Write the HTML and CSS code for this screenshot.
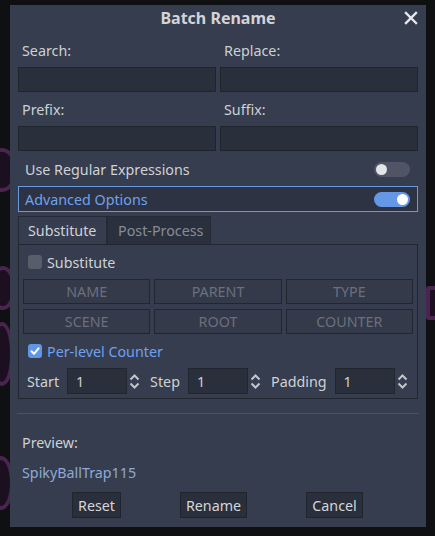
FILE: index.html
```html
<!DOCTYPE html>
<html>
<head>
<meta charset="utf-8">
<link rel="stylesheet" href="styles.css">
</head>
<body>
<div class="scene">
  <div class="blob b1"></div>
  <div class="blob b2"></div>
  <div class="blob b3"></div>
  <div class="blob b4"></div>
  <div class="blob b5"></div>
</div>
<div class="dialog">
  <div class="titlebar">
    <span class="title">Batch Rename</span>
    <svg class="close" width="14" height="14" viewBox="0 0 14 14"><path d="M2 2 L12 12 M12 2 L2 12" stroke="#e6e8ec" stroke-width="2.4" stroke-linecap="square"/></svg>
  </div>
  <div class="content">
    <div class="pair labels first">
      <span class="lbl">Search:</span>
      <span class="lbl">Replace:</span>
    </div>
    <div class="pair inputs">
      <div class="field"></div>
      <div class="field"></div>
    </div>
    <div class="pair labels">
      <span class="lbl">Prefix:</span>
      <span class="lbl">Suffix:</span>
    </div>
    <div class="pair inputs">
      <div class="field"></div>
      <div class="field"></div>
    </div>
    <div class="switchrow">
      <span>Use Regular Expressions</span>
      <span class="toggle off"><span class="knob"></span></span>
    </div>
    <div class="switchrow focused">
      <span>Advanced Options</span>
      <span class="toggle on"><span class="knob"></span></span>
    </div>
    <div class="tabs">
      <div class="tab active">Substitute</div>
      <div class="tab">Post-Process</div>
    </div>
    <div class="panel">
      <div class="check">
        <span class="box"></span>
        <span>Substitute</span>
      </div>
      <div class="grid">
        <div class="gbtn">NAME</div>
        <div class="gbtn">PARENT</div>
        <div class="gbtn">TYPE</div>
        <div class="gbtn">SCENE</div>
        <div class="gbtn">ROOT</div>
        <div class="gbtn">COUNTER</div>
      </div>
      <div class="check checked">
        <span class="box"><svg width="14" height="14" viewBox="0 0 14 14"><path d="M3.5 7.3 L6 9.8 L10.6 4.4" fill="none" stroke="#ffffff" stroke-width="2" stroke-linecap="round" stroke-linejoin="round"/></svg></span>
        <span>Per-level Counter</span>
      </div>
      <div class="spins">
        <span class="slbl">Start</span>
        <div class="spin">1</div>
        <svg class="arrows" width="11" height="15" viewBox="0 0 11 15"><path d="M1.5 5.5 L5.5 1.5 L9.5 5.5 M1.5 9.5 L5.5 13.5 L9.5 9.5" fill="none" stroke="#c2c5cb" stroke-width="2"/></svg>
        <span class="slbl step">Step</span>
        <div class="spin">1</div>
        <svg class="arrows" width="11" height="15" viewBox="0 0 11 15"><path d="M1.5 5.5 L5.5 1.5 L9.5 5.5 M1.5 9.5 L5.5 13.5 L9.5 9.5" fill="none" stroke="#c2c5cb" stroke-width="2"/></svg>
        <span class="slbl pad">Padding</span>
        <div class="spin">1</div>
        <svg class="arrows" width="11" height="15" viewBox="0 0 11 15"><path d="M1.5 5.5 L5.5 1.5 L9.5 5.5 M1.5 9.5 L5.5 13.5 L9.5 9.5" fill="none" stroke="#c2c5cb" stroke-width="2"/></svg>
      </div>
    </div>
    <div class="sep"></div>
    <div class="lbl preview">Preview:</div>
    <div class="result">SpikyBallTrap115</div>
    <div class="buttons">
      <div class="btn reset">Reset</div>
      <div class="btn rename">Rename</div>
      <div class="btn cancel">Cancel</div>
    </div>
  </div>
</div>
</body>
</html>
```
FILE: styles.css
```css
html, body {
  margin: 0;
  padding: 0;
}
body {
  width: 435px;
  height: 536px;
  background: #0f1011;
  font-family: "Noto Sans", "Open Sans", sans-serif;
  font-size: 14.3px;
  color: #cfd1d5;
  position: relative;
  overflow: hidden;
}
.scene {
  position: absolute;
  inset: 0;
}
.blob {
  position: absolute;
  border: 4px solid #4b2452;
  border-radius: 50%;
  background: #1c1020;
}
.b1 { left: -14px; top: 148px; width: 24px; height: 36px; }
.b2 { left: -10px; top: 266px; width: 18px; height: 36px; }
.b3 { left: -10px; top: 322px; width: 16px; height: 56px; }
.b4 { left: -12px; top: 456px; width: 18px; height: 46px; }
.b5 { left: 426px; top: 286px; width: 10px; height: 26px; border-radius: 3px; }

.dialog {
  position: relative;
  margin: 5px 0 0 10px;
  width: 416px;
  height: 522px;
  background: #363d4e;
  box-sizing: border-box;
}
.titlebar {
  height: 27px;
  display: flex;
  align-items: center;
  justify-content: center;
  position: relative;
}
.title {
  font-weight: bold;
  font-size: 16px;
  color: #d2d4d8;
  margin-top: -1px;
}
.close {
  position: absolute;
  right: 8px;
  top: 6px;
}
.content {
  padding: 0 8px;
  display: flex;
  flex-direction: column;
}
.pair {
  display: grid;
  grid-template-columns: 1fr 1fr;
  column-gap: 4px;
}
.labels {
  height: 24px;
  align-items: center;
  margin-top: 5px;
}
.labels.first {
  margin-top: 6px;
}
.lbl {
  padding-left: 4px;
  color: #cdd0d4;
}
.inputs {
  margin-top: 5px;
}
.field {
  height: 25px;
  background: #2a2f3c;
  border: 1px solid #20242d;
  box-sizing: border-box;
}
.switchrow {
  display: flex;
  align-items: center;
  justify-content: space-between;
  height: 26px;
  padding: 0 7px 0 6px;
  box-sizing: border-box;
  border: 1px solid transparent;
  margin-top: 5px;
}
.switchrow.focused {
  margin-top: 4px;
  background: #2d3343;
  border-color: #6899e2;
  color: #6fa1ee;
}
.toggle {
  width: 36px;
  height: 15px;
  border-radius: 8px;
  display: flex;
  align-items: center;
  padding: 0 2px;
  box-sizing: border-box;
}
.toggle.off {
  background: #4f5565;
  justify-content: flex-start;
}
.toggle.on {
  background: #6497e6;
  justify-content: flex-end;
}
.knob {
  width: 11px;
  height: 11px;
  border-radius: 50%;
  background: #e4e5e8;
}
.toggle.on .knob { background: #ffffff; }

.tabs {
  display: flex;
  margin-top: 4px;
  height: 28px;
}
.tab {
  display: flex;
  align-items: center;
  white-space: nowrap;
  background: #2b303e;
  color: #878c97;
  border: 1px solid #252a35;
  border-bottom: none;
  box-sizing: border-box;
}
.tab.active {
  background: #363d4e;
  color: #d0d2d6;
  width: 89px;
  padding-left: 9px;
}
.tab:not(.active) {
  width: 104px;
  padding-left: 10px;
}
.panel {
  border: 1px solid #22262f;
  height: 155px;
  box-sizing: border-box;
  padding: 0 4px;
}
.check {
  display: flex;
  align-items: center;
  height: 22px;
  margin-top: 6px;
  padding-left: 5px;
  gap: 5px;
}
.box {
  width: 14px;
  height: 14px;
  border-radius: 3px;
  background: #575d6b;
  display: flex;
}
.check.checked {
  margin-top: 6px;
  color: #6fa1ee;
}
.check.checked .box {
  background: #6196e6;
}
.grid {
  display: grid;
  grid-template-columns: 1fr 1fr 1fr;
  gap: 5px 4px;
  margin-top: 6px;
}
.gbtn {
  height: 25px;
  border: 1px solid #22262f;
  background: #343a4a;
  box-sizing: border-box;
  display: flex;
  align-items: center;
  justify-content: center;
  color: #6a707d;
}
.spins {
  display: flex;
  align-items: center;
  margin-top: 6px;
  padding-left: 4px;
}
.slbl {
  margin-right: 8px;
}
.slbl.step { margin-left: 10px; margin-right: 8px; }
.slbl.pad { margin-left: 10px; margin-right: 8px; }
.spin {
  width: 60px;
  height: 26px;
  background: #2a2f3c;
  border: 1px solid #22262f;
  box-sizing: border-box;
  display: flex;
  align-items: center;
  padding-left: 8px;
  color: #cdd0d4;
}
.arrows {
  margin-left: 2px;
}
.sep {
  height: 1px;
  background: #4a5161;
  margin: 14px -1px 0 -1px;
}
.preview {
  margin-top: 17px;
  height: 22px;
  display: flex;
  align-items: center;
}
.result {
  margin-top: 8px;
  height: 22px;
  display: flex;
  align-items: center;
  padding-left: 4px;
  color: #8fa9d6;
}
.buttons {
  height: 26px;
  margin-top: 9px;
  display: flex;
}
.btn {
  height: 26px;
  background: #2a2f3c;
  border: 1px solid #20242d;
  box-sizing: border-box;
  display: flex;
  align-items: center;
  justify-content: center;
  color: #d4d6da;
}
.btn.reset { width: 49px; margin-left: 54px; }
.btn.rename { width: 67px; margin-left: 59px; }
.btn.cancel { width: 57px; margin-left: 59px; }
```
